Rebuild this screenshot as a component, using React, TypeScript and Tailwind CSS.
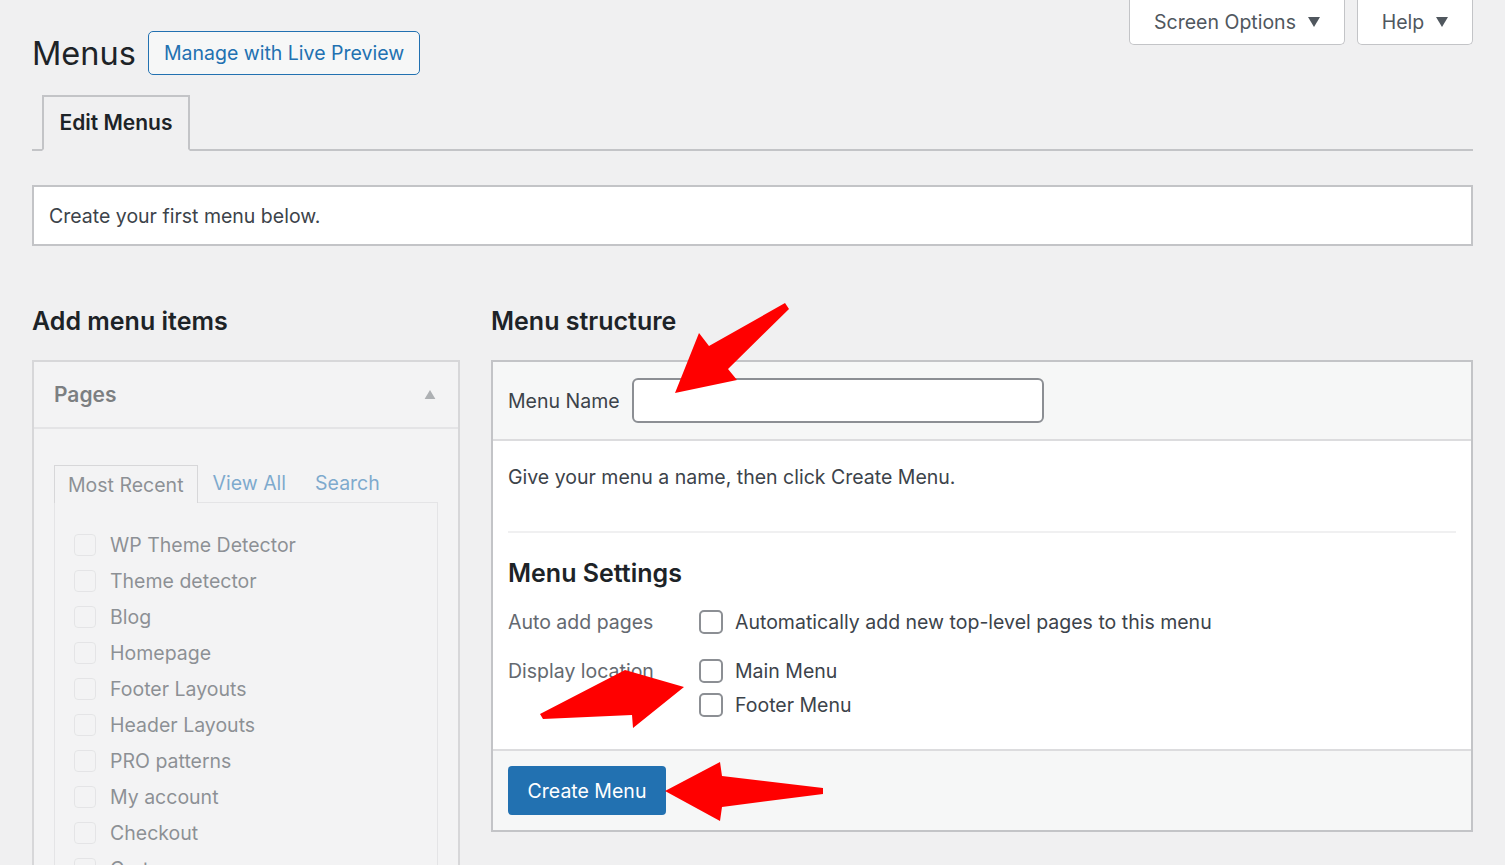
import React from "react";

const pages = [
  "WP Theme Detector",
  "Theme detector",
  "Blog",
  "Homepage",
  "Footer Layouts",
  "Header Layouts",
  "PRO patterns",
  "My account",
  "Checkout",
  "Cart",
];

function Caret({ up = false, className = "" }: { up?: boolean; className?: string }) {
  return (
    <svg viewBox="0 0 12 10" className={className} fill="currentColor">
      {up ? <path d="M6 0 L12 10 L0 10 Z" /> : <path d="M0 0 L12 0 L6 10 Z" />}
    </svg>
  );
}

function Checkbox({ faded = false }: { faded?: boolean }) {
  return (
    <span
      className={
        faded
          ? "block h-[22px] w-[22px] shrink-0 rounded-[4px] border border-[#dcdcde] bg-[#f6f7f7]"
          : "block h-[24px] w-[24px] shrink-0 rounded-[5px] border-2 border-[#8c8f94] bg-white"
      }
    />
  );
}

function Arrows() {
  return (
    <svg className="pointer-events-none absolute left-0 top-0" width="1505" height="865" viewBox="0 0 1505 865">
      <polygon fill="#ff0000" points="675,393 699,333 709,346 785,303 789,309 728,369 737,380" />
      <polygon fill="#ff0000" points="540,714 625,670 684,687 633,728 632,715 543,719" />
      <polygon fill="#ff0000" points="665,791 720,762 722,776 823,788 823,794 722,807 720,821" />
    </svg>
  );
}

export default function App() {
  return (
    <div className="relative min-h-[865px] overflow-hidden bg-[#f0f0f1] px-8 font-['Inter','Noto_Sans',sans-serif] text-[19.5px] leading-[30px] text-[#3c434a]">
      <div className="flex items-start justify-between">
        <div className="flex items-center gap-[12px] pt-[31px]">
          <h1 className="text-[32.5px] leading-[43px] text-[#1d2327]">Menus</h1>
          <button className="h-[44px] rounded-[5px] border border-[#2271b1] bg-[#f6f7f7] px-[15px] text-[#2271b1]">
            Manage with Live Preview
          </button>
        </div>
        <div className="flex gap-[12px]">
          <button className="flex h-[45px] w-[216px] items-center justify-center gap-[12px] rounded-b-[5px] border border-t-0 border-[#c3c4c7] bg-white text-[#50575e]">
            Screen Options
            <Caret className="h-[10px] w-[12px] text-[#50575e]" />
          </button>
          <button className="flex h-[45px] w-[116px] items-center justify-center gap-[12px] rounded-b-[5px] border border-t-0 border-[#c3c4c7] bg-white text-[#50575e]">
            Help
            <Caret className="h-[10px] w-[12px] text-[#50575e]" />
          </button>
        </div>
      </div>

      <div className="mt-[20px] flex border-b-2 border-[#c3c4c7] pl-[10px]">
        <div className="-mb-[2px] flex h-[56px] w-[148px] items-center justify-center border-2 border-b-2 border-[#c3c4c7] border-b-[#f0f0f1] bg-[#f0f0f1] text-[21px] font-semibold text-[#1d2327]">
          Edit Menus
        </div>
      </div>

      <div className="mt-[34px] flex h-[61px] items-center border-2 border-[#c3c4c7] bg-white px-[15px]">
        Create your first menu below.
      </div>

      <div className="mt-[60px] flex gap-[31px]">
        <div className="w-[428px] shrink-0">
          <h2 className="text-[25px] font-semibold leading-[30px] text-[#1d2327]">Add menu items</h2>
          <div className="mt-[24px] h-[520px] border-2 border-[#c3c4c7] bg-[#f6f7f7] opacity-55">
            <div className="flex h-[67px] items-center justify-between border-b-2 border-[#dcdcde] pl-[20px] pr-[22px]">
              <span className="text-[21px] font-semibold text-[#1d2327]">Pages</span>
              <Caret up className="h-[9px] w-[12px] text-[#787c82]" />
            </div>
            <div className="px-[20px] pt-[36px]">
              <div className="flex items-end">
                <div className="-mb-[1px] flex h-[38px] items-center border border-b-0 border-[#c3c4c7] bg-[#f6f7f7] px-[13px] text-[#3c434a]">
                  Most Recent
                </div>
                <span className="ml-[15px] pb-[4px] text-[#2271b1]">View All</span>
                <span className="ml-[29px] pb-[4px] text-[#2271b1]">Search</span>
              </div>
              <div className="h-[400px] border border-[#dcdcde] bg-[#f6f7f7] pl-[19px] pt-[24px]">
                {pages.map((p) => (
                  <div key={p} className="flex h-[36px] items-center gap-[14px] text-[#3c434a]">
                    <Checkbox faded />
                    {p}
                  </div>
                ))}
              </div>
            </div>
          </div>
        </div>

        <div className="flex-1">
          <h2 className="text-[25px] font-semibold leading-[30px] text-[#1d2327]">Menu structure</h2>
          <div className="mt-[24px] border-2 border-[#c3c4c7] bg-white">
            <div className="flex h-[79px] items-center gap-[12px] border-b-2 border-[#dcdcde] bg-[#f6f7f7] px-[15px]">
              <span>Menu Name</span>
              <div className="h-[45px] w-[412px] rounded-[6px] border-2 border-[#8c8f94] bg-white" />
            </div>
            <div className="px-[15px]">
              <div className="h-[92px] border-b-2 border-[#f0f0f1] pt-[21px]">
                Give your menu a name, then click Create Menu.
              </div>
              <h3 className="mt-[25px] text-[25px] font-semibold leading-[30px] text-[#1d2327]">Menu Settings</h3>
              <div className="mt-[19px] flex">
                <div className="w-[191px] text-[#646970]">Auto add pages</div>
                <div className="flex items-center gap-[12px]">
                  <Checkbox />
                  Automatically add new top-level pages to this menu
                </div>
              </div>
              <div className="mt-[19px] flex pb-[29px]">
                <div className="w-[191px] text-[#646970]">Display location</div>
                <div className="flex flex-col gap-[4px]">
                  <div className="flex items-center gap-[12px]">
                    <Checkbox />
                    Main Menu
                  </div>
                  <div className="flex items-center gap-[12px]">
                    <Checkbox />
                    Footer Menu
                  </div>
                </div>
              </div>
            </div>
            <div className="flex h-[81px] items-center border-t-2 border-[#dcdcde] bg-[#f6f7f7] px-[15px]">
              <button className="h-[49px] w-[158px] rounded-[4px] bg-[#2271b1] text-white">
                Create Menu
              </button>
            </div>
          </div>
        </div>
      </div>
      <Arrows />
    </div>
  );
}
